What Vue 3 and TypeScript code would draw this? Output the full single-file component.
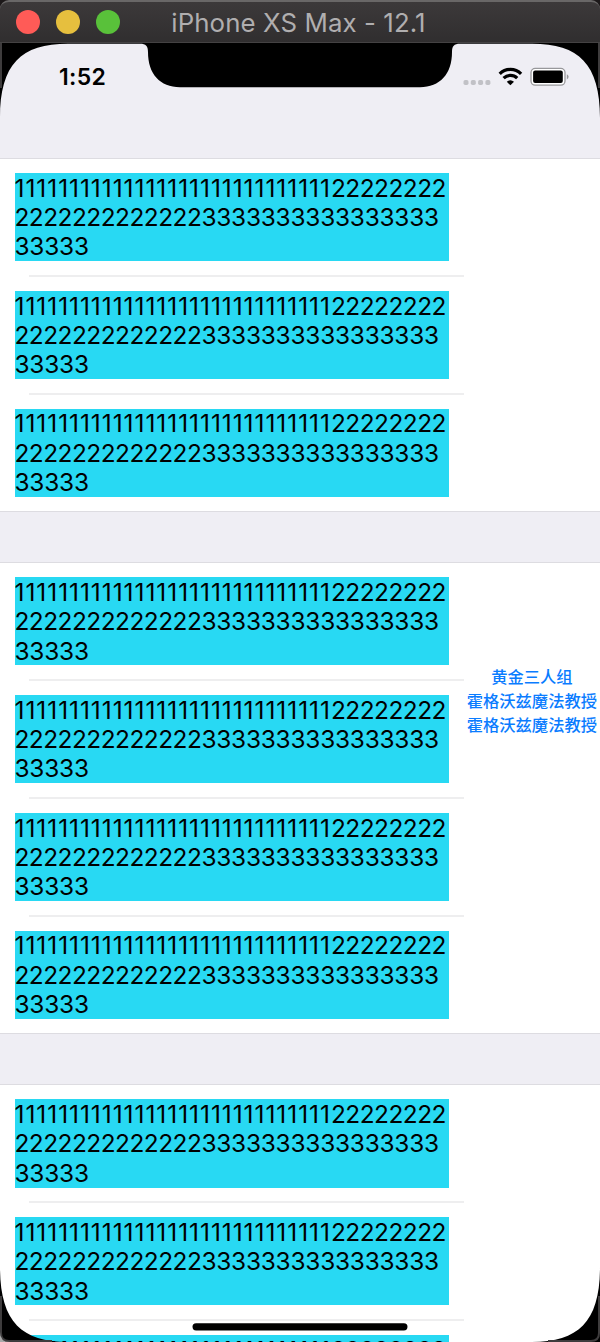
<script setup lang="ts">
interface Section {
  id: number
  rows: number
}

const sections: Section[] = [
  { id: 0, rows: 3 },
  { id: 1, rows: 4 },
  { id: 2, rows: 3 },
]

const ones = '1'.repeat(29)
const twosHead = '2'.repeat(8)
const twosTail = '2'.repeat(13)
const threesHead = '3'.repeat(16)
const threesTail = '3'.repeat(5)

const indexTitles = ['黄金三人组', '霍格沃兹魔法教授', '霍格沃兹魔法教授']
</script>

<template>
  <div class="window">
    <header class="titlebar">
      <div class="lights">
        <i class="light close"></i>
        <i class="light minimize"></i>
        <i class="light zoom"></i>
      </div>
      <span class="title">iPhone XS Max - 12.1</span>
    </header>

    <main class="screen">
      <div class="status">
        <span class="time">1:52</span>
        <svg class="indicators" width="108" height="22" viewBox="462 66 108 22">
          <g fill="#c1c1c6">
            <rect x="463.5" y="80" width="5" height="5" rx="1.7" />
            <rect x="470.8" y="80" width="5" height="5" rx="1.7" />
            <rect x="478.1" y="80" width="5" height="5" rx="1.7" />
            <rect x="485.4" y="80" width="5" height="5" rx="1.7" />
          </g>
          <g fill="none" stroke="#000" stroke-width="3.2">
            <path d="M499.7 73.9 A15 15 0 0 1 521.1 73.9" />
            <path d="M503.6 78.2 A9.6 9.6 0 0 1 517.2 78.2" />
          </g>
          <path d="M506.8 81.7 A5.5 5.5 0 0 1 514 81.7 L510.4 85.3 Z" />
          <rect x="531" y="68.4" width="34" height="16.8" rx="4.2" fill="#fff" stroke="#98989b" stroke-width="1.3" />
          <rect x="533.1" y="70.4" width="29.7" height="12.7" rx="2" />
          <path d="M566.8 74.2 Q568.6 75 568.6 76.8 Q568.6 78.6 566.8 79.4 Z" fill="#98989b" />
        </svg>
      </div>

      <section v-for="section in sections" :key="section.id" class="group">
        <div v-for="row in section.rows" :key="row" class="cell">
          <p class="label">
            <span class="line"><span class="one">{{ ones }}</span><span class="two">{{ twosHead }}</span></span>
            <span class="line"><span class="two">{{ twosTail }}</span><span class="three">{{ threesHead }}</span></span>
            <span class="line"><span class="three">{{ threesTail }}</span></span>
          </p>
        </div>
      </section>
    </main>

    <nav class="index">
      <span v-for="(title, i) in indexTitles" :key="i">{{ title }}</span>
    </nav>

    <svg class="bezel" width="600" height="1342" viewBox="0 0 600 1342">
      <path d="M0 43 H600 V118 C600 64 579 43.7 532 43.7 H460 C454 43.7 452 46 452 52 C452 74 440 87.2 420 87.2 H180 C160 87.2 148 74 148 52 C148 46 146 43.7 140 43.7 H68 C21 43.7 0 64 0 118 Z" />
      <path d="M0 1267 C0 1321 21 1342 68 1342 H0 Z M600 1267 C600 1321 579 1342 532 1342 H600 Z" />
      <g fill="none" stroke="#3e3c3d" stroke-width="2">
        <path d="M1 43 V88" />
        <path d="M599 43 V88" />
        <path d="M1 1296 V1333 Q1 1341 9 1341 H52" />
        <path d="M599 1296 V1333 Q599 1341 591 1341 H548" />
      </g>
      <path d="M0 1332 Q0 1342 10 1342 H0 Z" fill="#aaa" />
      <rect x="192.5" y="1323.2" width="215" height="7.2" rx="3.6" />
    </svg>
  </div>
</template>

<style>
body {
  margin: 0;
}
</style>

<style scoped>
.window {
  position: relative;
  width: 600px;
  height: 1342px;
  overflow: hidden;
  background: #1c1819;
  font-family: Inter, "Liberation Sans", sans-serif;
}

.titlebar {
  position: relative;
  box-sizing: border-box;
  height: 43px;
  padding: 2px 17px 0 16px;
  display: flex;
  align-items: center;
  justify-content: center;
  border-top: 2px solid #696767;
  border-bottom: 1px solid #444243;
  border-radius: 9px 9px 0 0;
  background: linear-gradient(#3c393a, #302e2f);
}

.lights {
  position: absolute;
  left: 16px;
  top: 8px;
  display: flex;
  gap: 16px;
}

.light {
  width: 24px;
  height: 24px;
  border-radius: 50%;
}

.close {
  background: #ff5b57;
}

.minimize {
  background: #e6bf3e;
}

.zoom {
  background: #59c13a;
}

.title {
  margin-right: 2px;
  color: #b0aeaf;
  font-size: 25.8px;
  line-height: 38px;
  letter-spacing: 0.1px;
  white-space: nowrap;
}

.screen {
  height: 1299px;
  overflow: hidden;
  background: #efeef4;
}

.status {
  display: flex;
  justify-content: space-between;
  box-sizing: border-box;
  height: 115.5px;
  padding: 23px 30px 0 59px;
}

.time {
  font-size: 23px;
  font-weight: 600;
  line-height: 22px;
  letter-spacing: 0.3px;
}

.group {
  box-sizing: border-box;
  margin-bottom: 50.8px;
  background: #fff;
  box-shadow: 0 -1px 0 #dddce1, inset 0 -1px 0 #dddce1;
}

.cell {
  position: relative;
  box-sizing: border-box;
  height: 117.83px;
  padding: 14.5px;
}

.cell:not(:last-child)::after {
  content: "";
  position: absolute;
  left: 29px;
  bottom: -0.6px;
  width: 435px;
  height: 2px;
  background: #eeeeef;
}

.label {
  box-sizing: border-box;
  width: 434.8px;
  height: 88.2px;
  margin: 0;
  padding-top: 0.7px;
  background: #28d9f3;
  color: #000;
  font-size: 24.4px;
  line-height: 29.3px;
}

.line {
  display: block;
  white-space: nowrap;
}

.one {
  letter-spacing: 0.99px;
}

.two {
  letter-spacing: -0.5px;
}

.three {
  letter-spacing: -0.22px;
}

.index {
  position: absolute;
  right: 3px;
  top: 665px;
  display: flex;
  flex-direction: column;
  align-items: center;
  color: #0a7cff;
  font-family: "Noto Sans CJK SC", sans-serif;
  font-size: 16.3px;
  font-weight: 500;
  line-height: 23.8px;
}

.bezel {
  position: absolute;
  inset: 0;
}
</style>
